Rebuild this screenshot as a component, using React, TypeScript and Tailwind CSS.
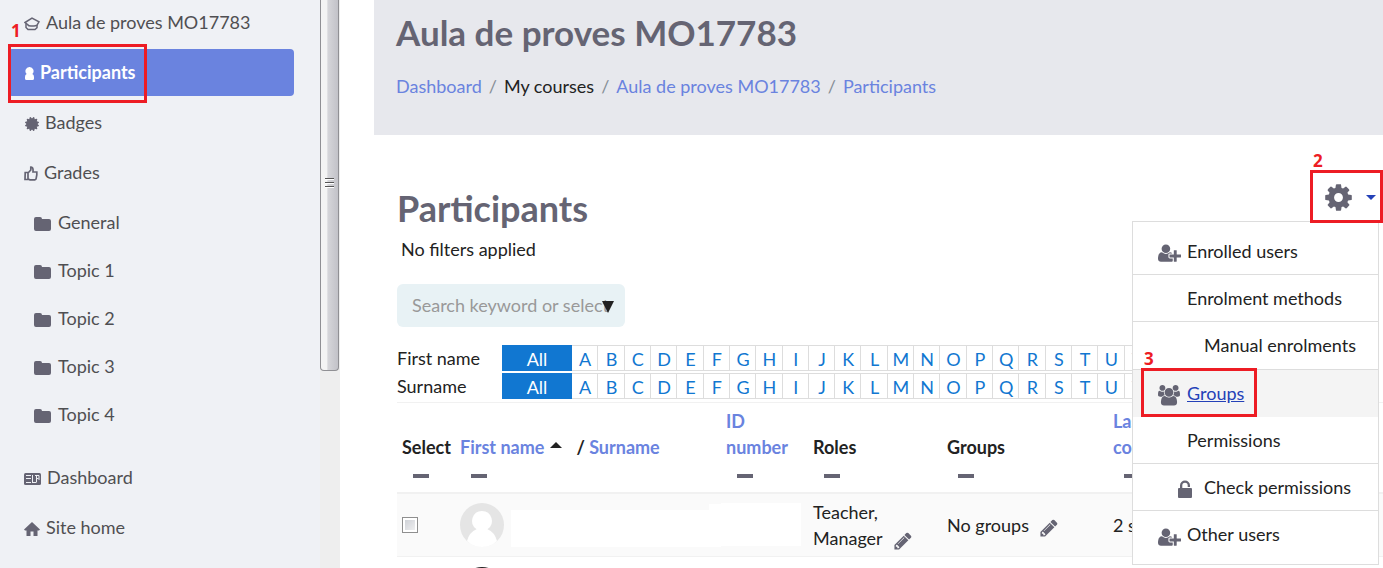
import type { ReactNode } from 'react';

const icons = {
  cog: {
    box: '0 0 1792 1792',
    d: 'M1152 896q0-106-75-181t-181-75-181 75-75 181 75 181 181 75 181-75 75-181zm512-109v222q0 12-8 23t-20 13l-185 28q-19 54-39 91 35 50 107 138 10 12 10 25t-9 23q-27 37-99 108t-94 71q-12 0-26-9l-138-108q-44 23-91 38-16 136-29 186-7 28-36 28h-222q-14 0-24.5-8.5t-11.5-21.5l-28-184q-49-16-90-37l-141 107q-10 9-25 9-14 0-25-11-126-114-165-168-7-10-7-23 0-12 8-23 15-21 51-66.5t54-70.5q-27-50-41-99l-183-27q-13-2-21-12.5t-8-23.5v-222q0-12 8-23t19-13l186-28q14-46 39-92-40-57-107-138-10-12-10-24 0-10 9-23 26-36 98.5-107.5t94.5-71.5q13 0 26 10l138 107q44-23 91-38 16-136 29-186 7-28 36-28h222q14 0 24.5 8.5t11.5 21.5l28 184q49 16 90 37l142-107q9-9 24-9 13 0 25 10 129 119 165 170 7 8 7 22 0 12-8 23-15 21-51 66.5t-54 70.5q26 50 41 98l183 28q13 2 21 12.5t8 23.5z',
  },
  pencil: {
    box: '0 0 1792 1792',
    d: 'M491 1536l91-91-235-235-91 91v107h128v128h107zm523-928q0-22-22-22-10 0-17 7l-542 542q-7 7-7 17 0 22 22 22 10 0 17-7l542-542q7-7 7-17zm-54-192l416 416-832 832h-416v-416zm683 96q0 53-37 90l-166 166-416-416 166-165q36-38 90-38 53 0 91 38l235 234q37 39 37 91z',
  },
  users: {
    box: '0 0 1920 1792',
    d: 'M593 896q-162 5-265 128h-134q-82 0-138-40.5t-56-118.5q0-353 124-353 6 0 43.5 21t97.5 42.5 119 21.5q67 0 133-23-5 37-5 66 0 139 81 256zm1071 637q0 120-73 189.5t-194 69.5h-874q-121 0-194-69.5t-73-189.5q0-53 3.5-103.5t14-109 26.5-108.5 43-97.5 62-81 85.5-53.5 111.5-20q10 0 43 21.5t73 48 107 48 135 21.5 135-21.5 107-48 73-48 43-21.5q61 0 111.5 20t85.5 53.5 62 81 43 97.5 26.5 108.5 14 109 3.5 103.5zm-1024-1277q0 106-75 181t-181 75-181-75-75-181 75-181 181-75 181 75 75 181zm704 384q0 159-112.5 271.5t-271.5 112.5-271.5-112.5-112.5-271.5 112.5-271.5 271.5-112.5 271.5 112.5 112.5 271.5zm576 225q0 78-56 118.5t-138 40.5h-134q-103-123-265-128 81-117 81-256 0-29-5-66 66 23 133 23 59 0 119-21.5t97.5-42.5 43.5-21q124 0 124 353zm-128-609q0 106-75 181t-181 75-181-75-75-181 75-181 181-75 181 75 75 181z',
  },
  userPlus: {
    box: '0 0 2048 1792',
    d: 'M704 896q-159 0-271.5-112.5t-112.5-271.5 112.5-271.5 271.5-112.5 271.5 112.5 112.5 271.5-112.5 271.5-271.5 112.5zm960 128h352q13 0 22.5 9.5t9.5 22.5v192q0 13-9.5 22.5t-22.5 9.5h-352v352q0 13-9.5 22.5t-22.5 9.5h-192q-13 0-22.5-9.5t-9.5-22.5v-352h-352q-13 0-22.5-9.5t-9.5-22.5v-192q0-13 9.5-22.5t22.5-9.5h352v-352q0-13 9.5-22.5t22.5-9.5h192q13 0 22.5 9.5t9.5 22.5v352zm-736 224q0 52 38 90t90 38h256v238q-68 50-171 50h-874q-121 0-194-69t-73-190q0-53 3.5-103.5t14-109 26.5-108.5 43-97.5 62-81 85.5-53.5 111.5-20q19 0 39 17 79 61 154.5 91.5t164.5 30.5 164.5-30.5 154.5-91.5q20-17 39-17 132 0 217 96h-223q-52 0-90 38t-38 90v192z',
  },
  badge: {
    box: '128 128 1536 1536',
    d: 'M1504 896l138 135q30 28 20 70-12 41-52 51l-188 48 53 186q12 41-19 70-29 31-70 19l-186-53-48 188q-10 40-51 52-12 2-19 2-31 0-51-22l-135-138-135 138q-28 30-70 20-41-11-51-52l-48-188-186 53q-41 12-70-19-31-29-19-70l53-186-188-48q-40-10-52-51-10-42 20-70l138-135-138-135q-30-28-20-70 12-41 52-51l188-48-53-186q-12-41 19-70 29-31 70-19l186 53 48-188q10-41 51-51 41-12 70 19l135 139 135-139q29-30 70-19 41 10 51 51l48 188 186-53q41-12 70 19 31 29 19 70l-53 186 188 48q40 10 52 51 10 42-20 70z',
  },
  folder: {
    box: '0 0 17 14',
    d: 'M2 0h4q2 0 2 2h7q2 0 2 2v8q0 2-2 2H2q-2 0-2-2V2q0-2 2-2z',
  },
  person: {
    box: '0 0 9 13',
    d: 'M4.500 0a4 4 0 0 1 2.800 6.900Q9 7.500 9 10v1.500Q9 13 7.500 13h-6Q0 13 0 11.500V10q0-2.500 1.700-3.100A4 4 0 0 1 4.500 0z',
  },
  home: {
    box: '0 0 16 14',
    d: 'M8 0l8 7.500-1 .9h-1.500V14H9.500V9.500h-3V14h-4V8.400H1L0 7.500z',
  },
  unlock: {
    box: '0 0 14 18',
    d: 'M2 8V5.500a5 5 0 0 1 10 0V7H9.700V5.500a2.700 2.700 0 0 0-5.400 0V8H13q1 0 1 1v8q0 1-1 1H1q-1 0-1-1V9q0-1 1-1z',
  },
};

function Icon({ name, className }: { name: keyof typeof icons; className: string }) {
  return (
    <svg viewBox={icons[name].box} className={`shrink-0 fill-current ${className}`} aria-hidden="true">
      <path d={icons[name].d} />
    </svg>
  );
}

function CapIcon() {
  return (
    <svg viewBox="0 0 16 14" className="w-4 shrink-0 fill-none stroke-current stroke-[1.500]" aria-hidden="true">
      <path d="M1 5.500L8 1.200 15 4.800l-2 3.400q-1.500.8-3 .8H7Q4.500 9 3.500 7.500z" />
      <path d="M2 6.500v4l2 2h7l2-1.800V8" />
    </svg>
  );
}

function ThumbIcon() {
  return (
    <svg viewBox="0 0 14 15" className="w-3.5 shrink-0 fill-none stroke-current stroke-[1.700]" aria-hidden="true">
      <path d="M4 6.500H1.200L1 13.500h3zM4 7l2.800-3V1.200Q9.500.8 9 6h3.800v3l-.4 2q-.2 2.800-1.500 2.800H6L4 13" />
    </svg>
  );
}

function NewsIcon() {
  return (
    <svg viewBox="0 0 17 12" className="w-[17px] shrink-0" aria-hidden="true">
      <rect width="17" height="12" rx="1.500" className="fill-current" />
      <path d="M2 2.500h5M2 5.500h5M2 9.500h5M8.500 2v8M9 9.500h3M11 2.500h4M12.500 2.500v7M12.500 5.500h2M15 2.500V7" className="fill-none stroke-[#eff1f5]" />
    </svg>
  );
}

type NavItem = { label: string; icon: ReactNode; active?: boolean };

const navItems: NavItem[] = [
  { label: 'Aula de proves MO17783', icon: <CapIcon /> },
  { label: 'Participants', icon: <Icon name="person" className="ml-px w-[9px]" />, active: true },
  { label: 'Badges', icon: <Icon name="badge" className="ml-px w-3.5" /> },
  { label: 'Grades', icon: <ThumbIcon /> },
];

const topics = ['General', 'Topic 1', 'Topic 2', 'Topic 3', 'Topic 4'];

const siteItems: NavItem[] = [
  { label: 'Dashboard', icon: <NewsIcon /> },
  { label: 'Site home', icon: <Icon name="home" className="w-4" /> },
];

function NavLink({ label, icon, active }: NavItem) {
  return (
    <a
      href="#"
      className={`flex h-[47px] items-center gap-1.5 rounded pl-4 ${active ? 'bg-[#6a83df] font-bold text-white' : ''}`}
    >
      <span className={`pt-0.5 ${active ? 'text-white' : 'text-[#656473]'}`}>{icon}</span>
      <span className="pb-0.5">{label}</span>
    </a>
  );
}

function Sidebar() {
  return (
    <div className="flex w-[340px] shrink-0 bg-[#eff1f5]">
      <nav className="flex flex-1 flex-col pr-[26px] pl-2 text-[#4f4f52]">
        <div className="-mt-px flex flex-col gap-[3px]">
          {navItems.map((item) => (
            <NavLink key={item.label} {...item} />
          ))}
        </div>
        <div className="mt-[3px]">
          {topics.map((topic) => (
            <a key={topic} href="#" className="flex h-12 items-center gap-[7px] pl-[26px]">
              <span className="pt-0.5 text-[#656473]">
                <Icon name="folder" className="w-[17px]" />
              </span>
              <span className="pb-0.5">{topic}</span>
            </a>
          ))}
        </div>
        <div className="mt-[15px] flex flex-col gap-[3px]">
          {siteItems.map((item) => (
            <NavLink key={item.label} {...item} />
          ))}
        </div>
      </nav>
      {/* Scroll track with its thumb */}
      <div className="w-5 bg-[#eeeeee]">
        <div className="flex h-[371px] w-[19px] items-center justify-center rounded-b-sm border border-t-0 border-[#909094] bg-linear-to-r from-[#f4f4f4] from-35% via-[#d6d6da] via-40% to-[#c2c2c8]">
          <div className="mb-1 flex w-[9px] flex-col gap-0.5">
            <span className="h-0.5 border-t border-[#555] bg-white" />
            <span className="h-0.5 border-t border-[#555] bg-white" />
            <span className="h-0.5 border-t border-[#555] bg-white" />
          </div>
        </div>
      </div>
    </div>
  );
}

const crumbs = [
  { label: 'Dashboard', link: true },
  { label: 'My courses', link: false },
  { label: 'Aula de proves MO17783', link: true },
  { label: 'Participants', link: true },
];

function PageHeader() {
  return (
    <header className="h-[135px] bg-[#e7e8ed] px-[22px] pt-2.5">
      <h1 className="text-[35px] leading-[44px] font-bold text-[#656473]">Aula de proves MO17783</h1>
      <ol className="mt-[19px] flex leading-[27px] whitespace-nowrap">
        {crumbs.map((crumb, i) => (
          <li key={crumb.label} className="flex">
            {i > 0 && <span className="px-[7px] text-[#868e96]">/</span>}
            {crumb.link ? (
              <a href="#" className="text-[#6a83df]">
                {crumb.label}
              </a>
            ) : (
              <span>{crumb.label}</span>
            )}
          </li>
        ))}
      </ol>
    </header>
  );
}

const letters = 'ABCDEFGHIJKLMNOPQRSTUVWXYZ'.split('');

function InitialsBar({ label }: { label: string }) {
  return (
    <div className="flex h-7 items-center">
      <span className="w-[105px] shrink-0">{label}</span>
      <div className="flex h-[26px] shrink-0 leading-[26px] text-[#1177d1]">
        <a href="#" className="w-[70px] bg-[#1177d1] pt-px text-center text-white">
          All
        </a>
        <div className="flex w-[684px]">
          {letters.map((letter) => (
            <a key={letter} href="#" className="flex-1 border-y border-r border-[#dddddd] pl-px text-center">
              {letter}
            </a>
          ))}
        </div>
      </div>
    </div>
  );
}

function Collapse() {
  return (
    <button type="button" aria-label="Hide column" className="ml-2.5 block h-8 px-px">
      <span className="block h-1 w-4 bg-[#656473]" />
    </button>
  );
}

function EditButton({ label }: { label: string }) {
  return (
    <button type="button" aria-label={label} className="ml-2.5 h-6 pt-1.5 text-[#656473]">
      <Icon name="pencil" className="w-5" />
    </button>
  );
}

function ParticipantsTable() {
  return (
    <table className="w-full table-fixed border-t border-[#f1f1f1]">
      <colgroup>
        <col className="w-[58px]" />
        <col className="w-[266px]" />
        <col className="w-[87px]" />
        <col className="w-[134px]" />
        <col className="w-[166px]" />
        <col />
      </colgroup>
      <thead className="align-bottom">
        <tr className="h-[90px] border-b-2 border-[#f1f1f1] text-left leading-[26px] whitespace-nowrap">
          <th className="pl-[5px]">
            Select
            <Collapse />
          </th>
          <th className="pl-[5px]">
            <div className="flex items-center">
              <a href="#" className="text-[#6a83df]">
                First name
              </a>
              <span className="mx-1.5 mb-1 border-x-[6px] border-b-[6px] border-x-transparent border-b-[#222]" />
              <span className="ml-2 whitespace-pre">/ </span>
              <a href="#" className="text-[#6a83df]">
                Surname
              </a>
            </div>
            <Collapse />
          </th>
          <th className="pl-[5px] text-[#6a83df]">
            <a href="#">
              ID
              <br />
              number
            </a>
            <Collapse />
          </th>
          <th className="pl-[5px]">
            Roles
            <Collapse />
          </th>
          <th className="pl-[5px]">
            Groups
            <Collapse />
          </th>
          <th className="pl-[5px] text-[#6a83df]">
            <a href="#">
              Last access to
              <br />
              course
            </a>
            <Collapse />
          </th>
        </tr>
      </thead>
      <tbody>
        <tr className="h-16 border-b border-[#f1f1f1] bg-[#fafafa] leading-[26px]">
          <td className="pl-[5px]">
            <input
              type="checkbox"
              aria-label="Select participant"
              className="block size-4 appearance-none border border-[#8f8f8f] bg-linear-to-br from-[#c9ccd2] to-[#f4f4f5] ring-2 ring-white ring-inset"
            />
          </td>
          <td className="pl-[5px]">
            <div className="flex items-end">
              <svg viewBox="0 0 44 44" className="mr-[7px] w-11 shrink-0" role="img" aria-label="User picture">
                <circle cx="22" cy="22" r="22" fill="#e5e5e5" />
                <path d="M22 8a10 10 0 0 1 5.500 18.300Q34.500 29 37 38q-6 6-15 6t-15-6q2.500-9 9.500-11.700A10 10 0 0 1 22 8z" fill="#fff" />
              </svg>
              <span className="h-[37px] flex-1 bg-white" />
              <span className="h-[43px] w-3 bg-white" />
            </div>
          </td>
          <td>
            <span className="mr-[7px] block h-[43px] bg-white" />
          </td>
          <td className="pl-[5px]">
            Teacher,
            <div className="flex">
              Manager
              <EditButton label="Edit roles" />
            </div>
          </td>
          <td className="pl-[5px]">
            <div className="flex">
              No groups
              <EditButton label="Edit groups" />
            </div>
          </td>
          <td className="pl-[5px]">2 secs</td>
        </tr>
        <tr className="h-16">
          <td />
          <td className="pt-2.5 pl-[5px] align-top">
            <div className="h-11 w-11 rounded-full bg-[#222]" />
          </td>
          <td colSpan={4} />
        </tr>
      </tbody>
    </table>
  );
}

const menuItems = [
  { label: 'Enrolled users', icon: <Icon name="userPlus" className="w-[23px]" />, row: 'h-[53px] pt-1.5' },
  { label: 'Enrolment methods', row: 'h-[47px]' },
  { label: 'Manual enrolments', row: 'h-12', nested: true },
  { label: 'Groups', icon: <Icon name="users" className="w-[22px]" />, row: 'h-[47px] bg-[#f4f4f4]', active: true },
  { label: 'Permissions', row: 'h-[47px]' },
  { label: 'Check permissions', icon: <Icon name="unlock" className="mb-0.5 w-3.5" />, row: 'h-[47px]', nested: true },
  { label: 'Other users', icon: <Icon name="userPlus" className="w-[23px]" />, row: 'h-[54px] pb-1.5' },
];

function Marker({ step, className, numberClass }: { step: number; className: string; numberClass: string }) {
  return (
    <div className={`pointer-events-none absolute border-3 border-[#ed1c24] ${className}`}>
      <span
        className={`absolute bottom-full left-0 font-["Open_Sans",sans-serif] text-[17px] leading-4 font-bold text-[#ed1c24] ${numberClass}`}
      >
        {step}
      </span>
    </div>
  );
}

function SettingsMenu() {
  return (
    <div className="absolute top-[35px] right-0 z-10">
      <button type="button" aria-label="Actions menu" className="ml-auto flex h-[53px] w-[73px] items-center pt-0.5 pl-[13px] text-[#656473]">
        <Icon name="cog" className="w-[31px]" />
        <span className="ml-3 border-x-[5px] border-t-[5px] border-x-transparent border-t-[#2441b8]" />
      </button>
      <ul className="mt-[-2px] mr-1 w-[247px] border border-[#dddddd] bg-white">
        {menuItems.map((item) => (
          <li key={item.label} className="border-b border-[#dddddd] last:border-b-0">
            <a href="#" className={`-mb-px flex items-center ${item.row}`}>
              <span className={`flex h-6 items-end text-[#656473] ${item.nested ? 'w-[71px] pl-[45px]' : 'w-[54px] pl-[25px]'}`}>
                {item.icon}
              </span>
              <span className={`pb-0.5 ${item.active ? 'text-[#2441b8] underline' : ''}`}>{item.label}</span>
            </a>
          </li>
        ))}
      </ul>
      <Marker step={2} className="top-0 right-0 h-[53px] w-[73px]" numberClass="pb-1" />
      <Marker step={3} className="top-[198px] right-[126px] h-[49px] w-[116px]" numberClass="pb-1" />
    </div>
  );
}

export default function App() {
  return (
    <div className="relative flex h-screen overflow-hidden bg-white font-[Lato,sans-serif] text-lg text-[#222]">
      <Sidebar />
      <main className="ml-[34px] min-w-0 flex-1">
        <PageHeader />
        <section className="relative pt-[51px] pl-[23px]">
          <h2 className="text-[36px] leading-[44px] font-bold text-[#656473]">Participants</h2>
          <p className="mt-1.5 pl-1 leading-[26px]">No filters applied</p>
          <div className="relative mt-[22px] w-[228px]">
            <input
              type="text"
              aria-label="Search keyword or select filter"
              placeholder="Search keyword or select filter"
              className="block h-[43px] w-full rounded-md bg-[#e8f2f5] pr-3 pb-0.5 pl-[15px] placeholder:text-[#999]"
            />
            <button
              type="button"
              aria-label="Open filter list"
              className="absolute top-[17px] right-[11px] border-x-[6px] border-t-[12px] border-x-transparent border-t-[#222]"
            />
          </div>
          <div className="mt-[17px] mb-0.5 overflow-hidden">
            <InitialsBar label="First name" />
            <InitialsBar label="Surname" />
          </div>
          <ParticipantsTable />
          <SettingsMenu />
        </section>
      </main>
      <Marker step={1} className="top-11 left-2 h-[59px] w-[139px]" numberClass="pb-2" />
    </div>
  );
}
